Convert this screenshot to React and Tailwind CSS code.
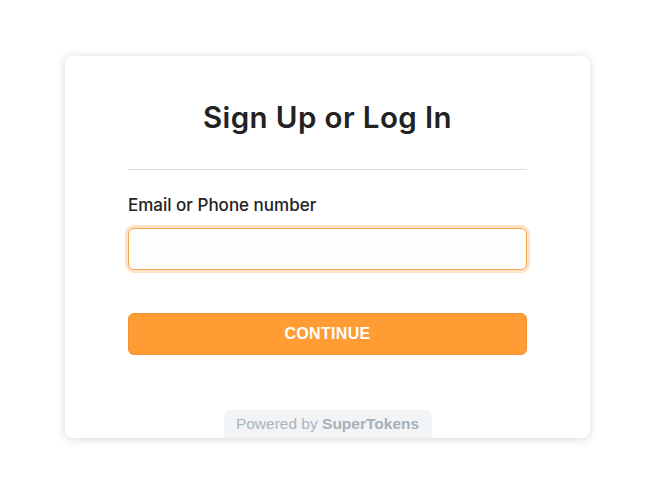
export default function App() {
  return (
    <div className="min-h-[502px] w-full bg-white pt-[56px]">
      <div className="ml-[65px] w-[525px] h-[382px] rounded-lg bg-white shadow-[0_1px_10px_rgba(0,0,0,0.16)] flex flex-col px-[63px] pt-[41px] overflow-hidden">
        <div className="h-[40px] flex items-center justify-center text-[29.5px] font-semibold text-[#222222] font-['Inter',sans-serif] tracking-[0.4px]">
          Sign Up or Log In
        </div>
        <div className="mt-[32px] h-px bg-[#dddddd]" />
        <div className="mt-[24px] h-[24px] flex items-center text-[17px] font-medium text-[#222222] font-['Inter',sans-serif]">
          Email or Phone number
        </div>
        <input
          className="mt-[10px] h-[42px] w-full rounded-md border border-[#f5a34f] bg-[#fdfdfd] shadow-[0_0_0_3px_#fde3c8] outline-none px-3"
          type="text"
        />
        <button className="mt-[43px] h-[42px] w-full rounded-md bg-[#ff9c33] border border-[#ef9030] text-white font-bold text-[16px] font-['Liberation_Sans',sans-serif] tracking-[0.3px]">
          CONTINUE
        </button>
        <div className="mt-auto flex justify-center">
          <div className="w-[208px] h-[28px] rounded-t-md bg-[#f2f4f6] flex items-center justify-center text-[15.5px] text-[#aab4bd] font-['Liberation_Sans',sans-serif]">
            <span>Powered by&nbsp;</span>
            <span className="font-bold text-[#a5b0ba]">SuperTokens</span>
          </div>
        </div>
      </div>
    </div>
  );
}
